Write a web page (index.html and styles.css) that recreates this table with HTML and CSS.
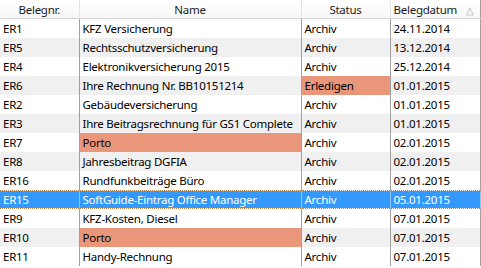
FILE: index.html
```html
<!DOCTYPE html>
<html lang="de">
<head>
<meta charset="utf-8">
<link rel="stylesheet" href="styles.css">
</head>
<body>
<table class="grid">
  <colgroup>
    <col class="c-nr"><col class="c-name"><col class="c-status"><col class="c-date">
  </colgroup>
  <thead>
    <tr>
      <th>Belegnr.</th>
      <th>Name</th>
      <th>Status</th>
      <th class="sorted"><span class="hlabel">Belegdatum</span><span class="sort">&#9651;</span></th>
    </tr>
  </thead>
  <tbody>
    <tr><td>ER1</td><td>KFZ Versicherung</td><td>Archiv</td><td>24.11.2014</td></tr>
    <tr class="alt"><td>ER5</td><td>Rechtsschutzversicherung</td><td>Archiv</td><td>13.12.2014</td></tr>
    <tr><td>ER4</td><td>Elektronikversicherung 2015</td><td>Archiv</td><td>25.12.2014</td></tr>
    <tr class="alt"><td>ER6</td><td>Ihre Rechnung Nr. BB10151214</td><td class="mark">Erledigen</td><td>01.01.2015</td></tr>
    <tr><td>ER2</td><td>Gebäudeversicherung</td><td>Archiv</td><td>01.01.2015</td></tr>
    <tr class="alt"><td>ER3</td><td>Ihre Beitragsrechnung für GS1 Complete</td><td>Archiv</td><td>01.01.2015</td></tr>
    <tr><td>ER7</td><td class="mark">Porto</td><td>Archiv</td><td>02.01.2015</td></tr>
    <tr class="alt"><td>ER8</td><td>Jahresbeitrag DGFIA</td><td>Archiv</td><td>02.01.2015</td></tr>
    <tr><td>ER16</td><td>Rundfunkbeiträge Büro</td><td>Archiv</td><td>02.01.2015</td></tr>
    <tr class="sel"><td>ER15</td><td>SoftGuide-Eintrag Office Manager</td><td>Archiv</td><td>05.01.2015</td></tr>
    <tr><td>ER9</td><td>KFZ-Kosten, Diesel</td><td>Archiv</td><td>07.01.2015</td></tr>
    <tr class="alt"><td>ER10</td><td class="mark">Porto</td><td>Archiv</td><td>07.01.2015</td></tr>
    <tr><td>ER11</td><td>Handy-Rechnung</td><td>Archiv</td><td>07.01.2015</td></tr>
  </tbody>
</table>
</body>
</html>
```
FILE: styles.css
```css
html, body {
  margin: 0;
  padding: 0;
  background: #ffffff;
}
body {
  font-family: "Noto Sans", "Open Sans", sans-serif;
  font-size: 11.5px;
  letter-spacing: -0.25px;
  color: #000;
}
.grid {
  border-collapse: collapse;
  table-layout: fixed;
  width: 480px;
}
.c-nr { width: 79px; }
.c-name { width: 222px; }
.c-status { width: 89px; }
.c-date { width: 90px; }

.grid th {
  height: 16px;
  padding: 2px 0 0 0;
  font-weight: normal;
  text-align: center;
  background: linear-gradient(#ffffff, #f7f7f7);
  border-right: 1px solid #e3e3e3;
  border-bottom: 1px solid #d5d5d5;
  color: #1a1a1a;
  white-space: nowrap;
  overflow: hidden;
  line-height: 16px;
}
.grid th.sorted {
  text-align: left;
  padding-left: 3px;
  border-right: 1px solid #a0a0a0;
}
.sort {
  margin-left: 9px;
  font-size: 10px;
  color: #a8a8a8;
}
.grid td {
  height: 19px;
  padding: 0 0 0 3px;
  border-right: 1px solid #a0a0a0;
  white-space: nowrap;
  overflow: hidden;
  line-height: 19px;
}
.grid tr.alt td {
  background: #f0f0f0;
}
.grid td.mark,
.grid tr.alt td.mark {
  background: #e9967a;
}
.grid tr.sel td {
  background: #3399ff;
  color: #ffffff;
  border-top: 1px dotted #c08040;
  border-bottom: 1px dotted #c08040;
  border-right-color: #8cc4f8;
  height: 17px;
  line-height: 17px;
}
```
